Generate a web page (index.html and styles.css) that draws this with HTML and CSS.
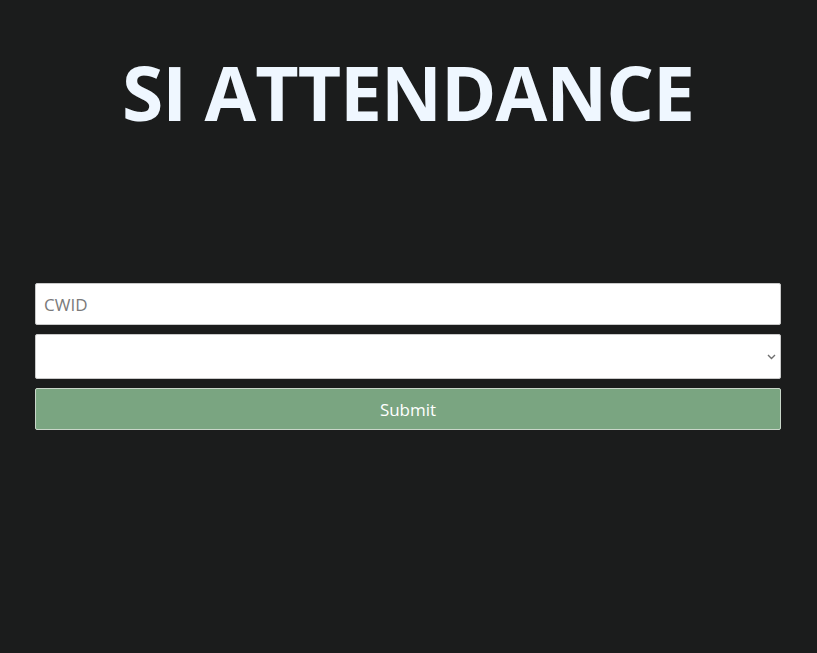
FILE: index.html
```html
<!DOCTYPE html>
<html lang="en">
<head>
<meta charset="utf-8">
<title>SI Attendance</title>
<link rel="stylesheet" href="styles.css">
</head>
<body>
<main class="page">
  <h1 class="title">SI ATTENDANCE</h1>
  <form class="form">
    <input class="field field-input" type="text" placeholder="CWID">
    <div class="select-wrap">
      <select class="field field-select">
        <option value=""></option>
      </select>
      <svg class="chevron" width="9" height="6" viewBox="0 0 9 6"><path d="M1 1l3.5 3.5L8 1" fill="none" stroke="#6f6f6f" stroke-width="1.4"/></svg>
    </div>
    <button class="submit" type="button">Submit</button>
  </form>
</main>
</body>
</html>
```
FILE: styles.css
```css
html, body {
  margin: 0;
  padding: 0;
  background: #1b1c1c;
  height: 100%;
}
body {
  font-family: "Open Sans", "Noto Sans", sans-serif;
}
.page {
  display: flex;
  flex-direction: column;
  padding: 0 36px 0 35px;
}
.title {
  margin: 47px 0 0;
  text-align: center;
  color: #eff7ff;
  font-size: 75px;
  font-weight: 700;
  line-height: 90px;
  letter-spacing: -1px;
}
.form {
  display: flex;
  flex-direction: column;
  gap: 9px;
  margin-top: 146px;
}
.field {
  box-sizing: border-box;
  width: 100%;
  margin: 0;
  border: 1px solid #c9c9c9;
  border-radius: 2px;
  background: #ffffff;
  font-family: inherit;
  font-size: 17px;
  color: #222;
  outline: none;
}
.field-input {
  height: 42px;
  padding: 0 8px;
}
.field-input::placeholder {
  color: #7a7a7a;
}
.select-wrap {
  position: relative;
}
.field-select {
  height: 45px;
  appearance: none;
  -webkit-appearance: none;
  padding: 0 8px;
}
.chevron {
  position: absolute;
  right: 5px;
  top: 20px;
  pointer-events: none;
}
.submit {
  box-sizing: border-box;
  height: 42px;
  width: 100%;
  border: 1px solid #c9d6c9;
  border-radius: 2px;
  background: #7aa581;
  color: #ffffff;
  font-family: inherit;
  font-size: 17px;
  padding: 0;
}
```
